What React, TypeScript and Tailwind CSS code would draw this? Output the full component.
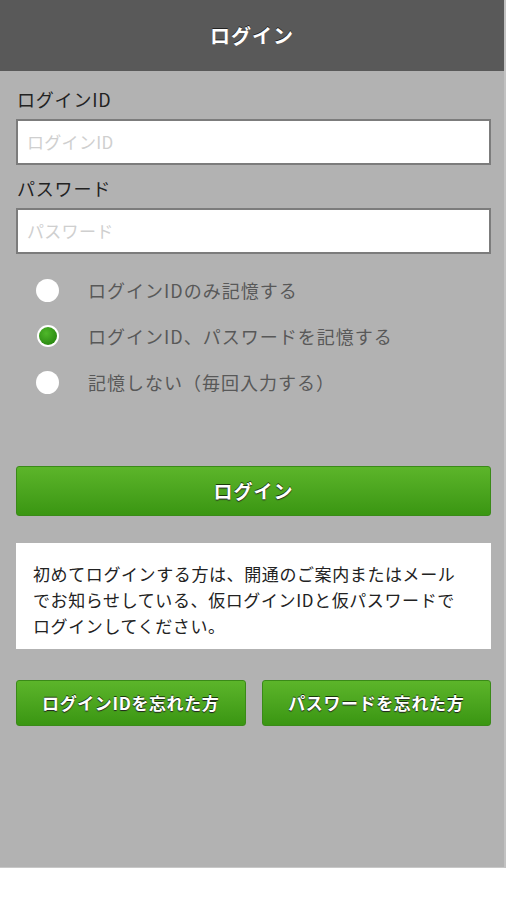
import React from "react";

const font = { fontFamily: '"Noto Sans CJK JP", "Noto Sans", sans-serif' };

function Radio({ checked, label }: { checked?: boolean; label: string }) {
  return (
    <div className="flex items-center h-[46px]">
      <div className="ml-[20px] w-[23px] flex justify-center">
        {checked ? (
          <div className="w-[22px] h-[22px] rounded-full bg-white flex items-center justify-center">
            <div className="w-[18px] h-[18px] rounded-full bg-[radial-gradient(circle_at_40%_35%,#4fb82a,#1f7a0a)]" />
          </div>
        ) : (
          <div className="w-[23px] h-[23px] rounded-full bg-white" />
        )}
      </div>
      <span className="text-[18px] text-[#585858] ml-[29px] tracking-[1px]">{label}</span>
    </div>
  );
}

function GreenButton({ children, className }: { children: React.ReactNode; className?: string }) {
  return (
    <button
      className={
        "flex items-center justify-center rounded-[3px] border border-[#3a8a18] bg-gradient-to-b from-[#5cb52a] to-[#3a9612] text-white font-bold [text-shadow:0_-1px_0_#1a3a0a,0_1px_1px_#222] " +
        (className ?? "")
      }
    >
      {children}
    </button>
  );
}

export default function App() {
  return (
    <div className="w-[506px] h-[900px] bg-white" style={font}>
      <div className="h-[868px] bg-[#b2b2b2] border-r-[2px] border-[#c2c2c2] border-b border-b-[#c8c8c8] flex flex-col">
        <div className="h-[71px] bg-[#595959] flex items-center justify-center">
          <span className="text-white text-[20px] font-bold tracking-[1px] [text-shadow:0_-1px_0_#222]">ログイン</span>
        </div>
        <div className="px-[16px] pr-[13px] flex flex-col">
          <div className="text-[18px] text-[#222] mt-[15px] ml-[1px] leading-[27px] tracking-[0.8px]">ログインID</div>
          <div className="mt-[6px] h-[46px] bg-white border-2 border-[#7c7c7c] flex items-center px-[9px]">
            <span className="text-[17px] text-[#cfcfcf] tracking-[0.3px]">ログインID</span>
          </div>
          <div className="text-[18px] text-[#222] mt-[10px] ml-[1px] leading-[27px] tracking-[0.8px]">パスワード</div>
          <div className="mt-[6px] h-[46px] bg-white border-2 border-[#7c7c7c] flex items-center px-[9px]">
            <span className="text-[17px] text-[#cfcfcf] tracking-[0.3px]">パスワード</span>
          </div>
          <div className="mt-[13px] flex flex-col">
            <Radio label="ログインIDのみ記憶する" />
            <Radio checked label="ログインID、パスワードを記憶する" />
            <Radio label="記憶しない（毎回入力する）" />
          </div>
          <GreenButton className="mt-[61px] h-[50px] w-full text-[19px] tracking-[1px]">ログイン</GreenButton>
          <div className="mt-[27px] bg-white h-[106px] px-[17px] pt-[18px] text-[17px] leading-[26px] text-[#222] tracking-[0.6px] whitespace-nowrap">
            初めてログインする方は、開通のご案内またはメール
            <br />
            でお知らせしている、仮ログインIDと仮パスワードで
            <br />
            ログインしてください。
          </div>
          <div className="mt-[31px] flex gap-[16px]">
            <GreenButton className="flex-1 h-[46px] text-[17px] tracking-[0.6px]">ログインIDを忘れた方</GreenButton>
            <GreenButton className="flex-1 h-[46px] text-[17px] tracking-[0.6px]">パスワードを忘れた方</GreenButton>
          </div>
        </div>
      </div>
    </div>
  );
}
